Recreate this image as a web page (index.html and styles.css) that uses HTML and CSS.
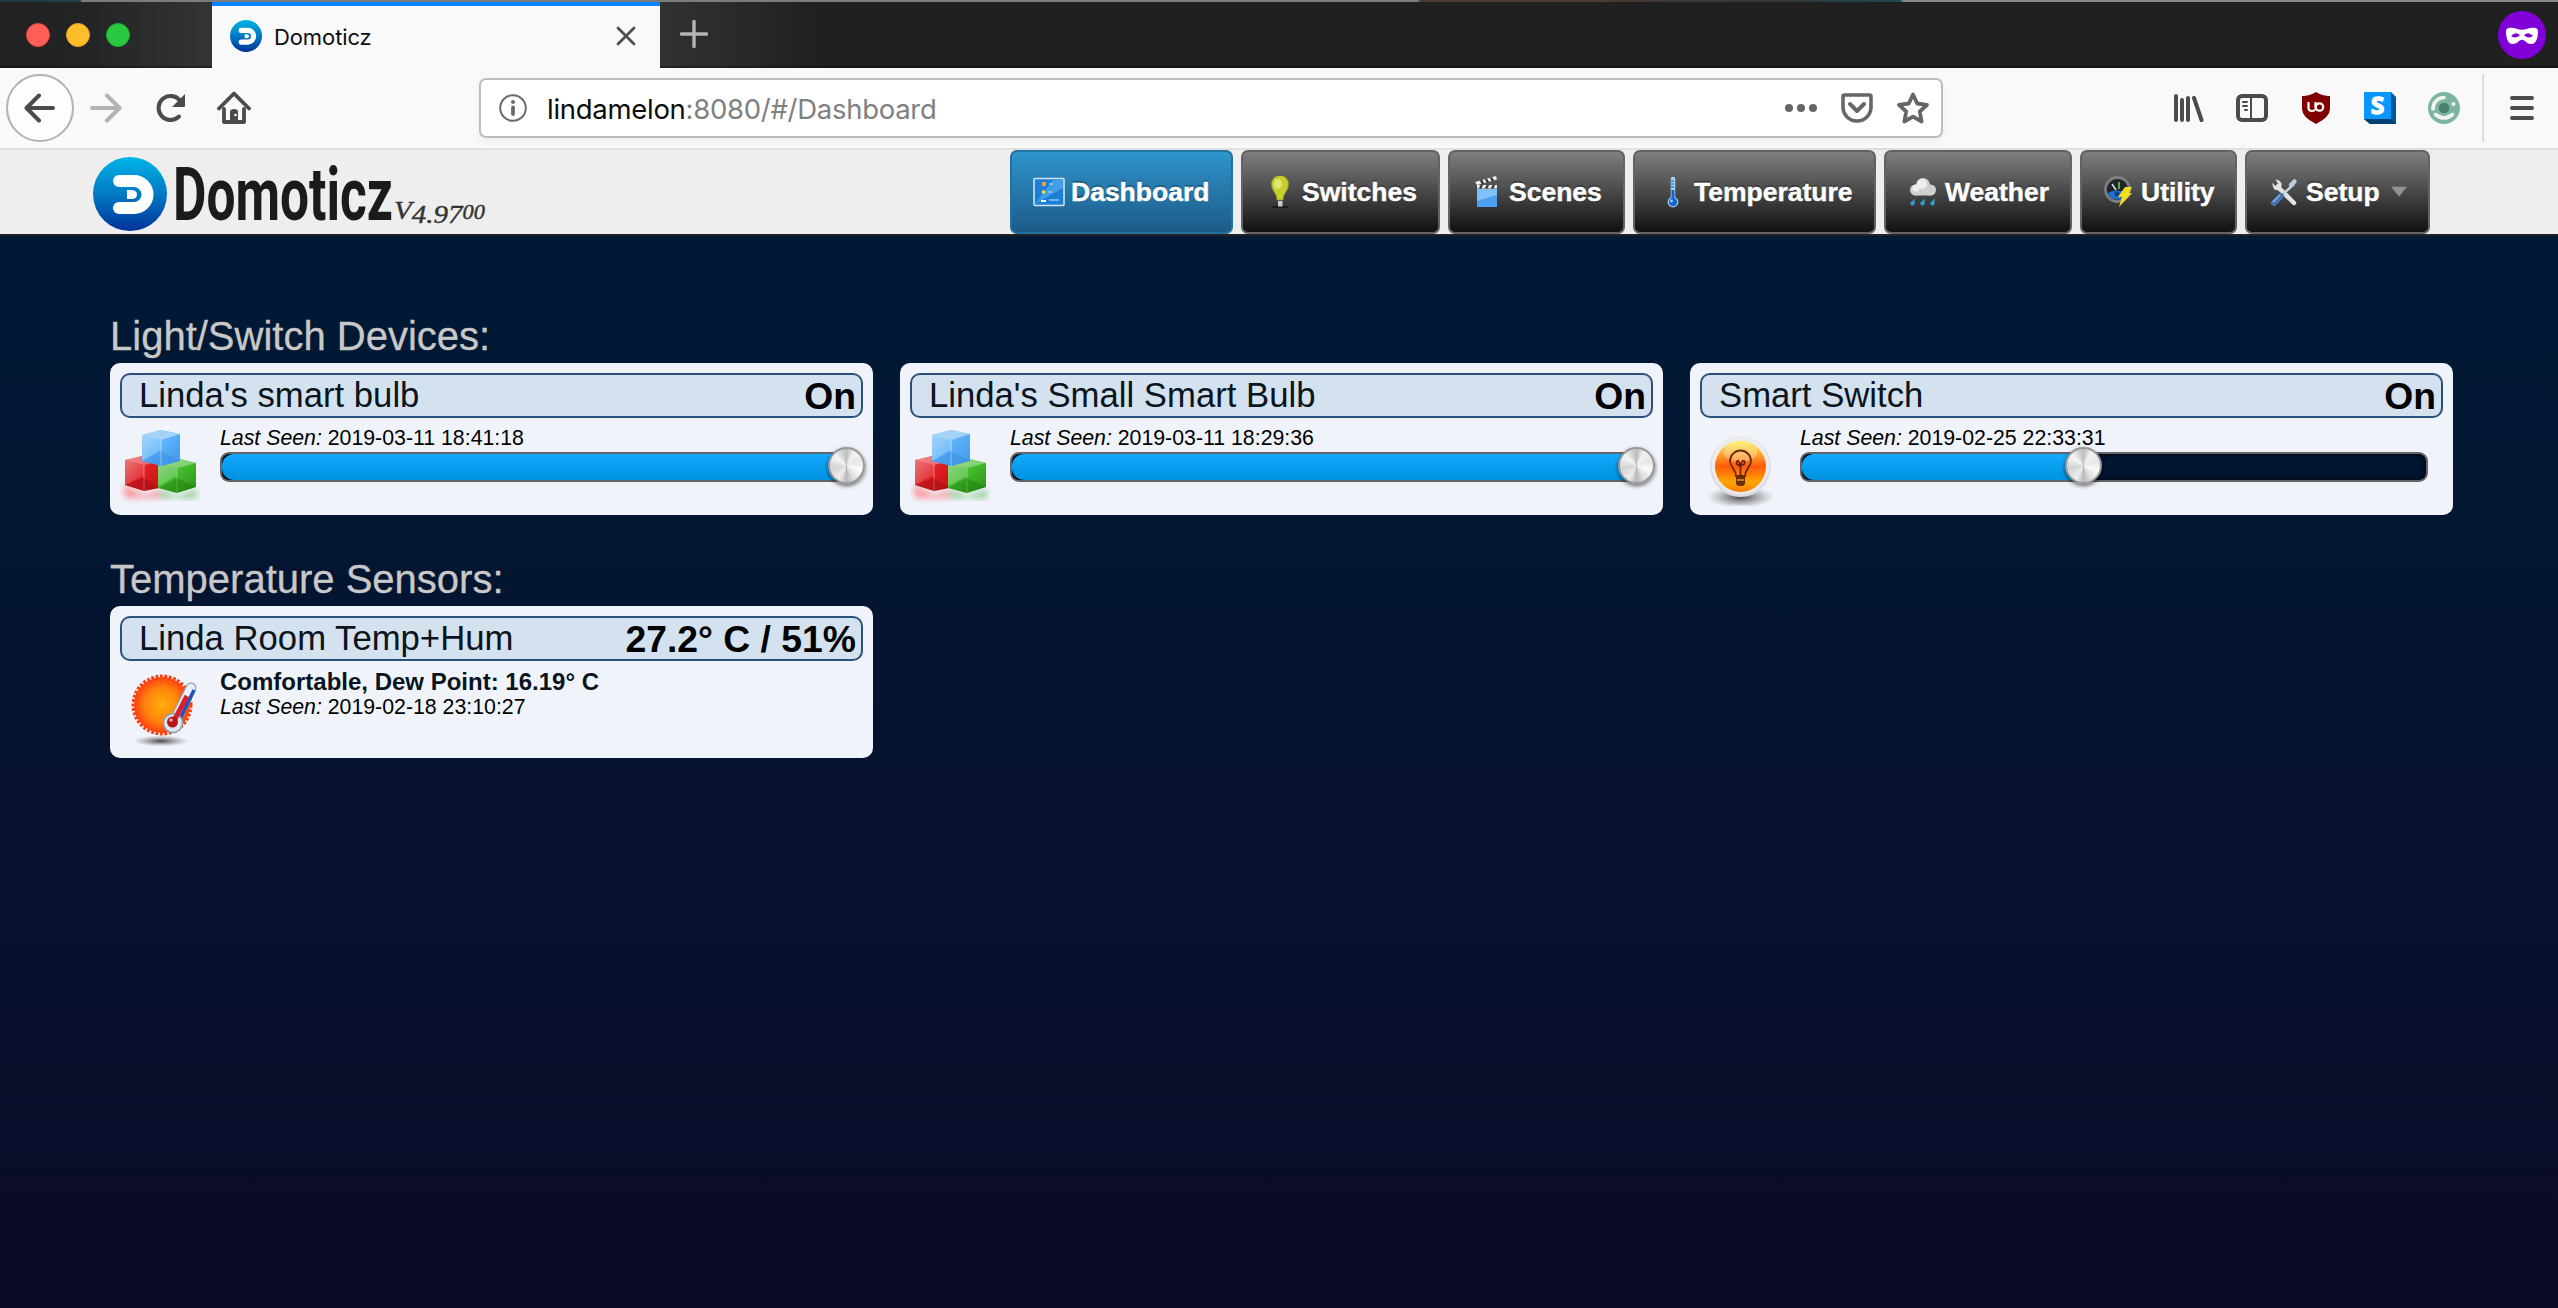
FILE: index.html
```html
<!DOCTYPE html>
<html lang="en">
<head>
<meta charset="utf-8">
<title>Domoticz</title>
<link rel="stylesheet" href="styles.css">
</head>
<body>
<svg class="defs" width="0" height="0" aria-hidden="true">
  <defs>
    <linearGradient id="logoBlue" x1="0" y1="0" x2="0" y2="1"><stop offset="0" stop-color="#00b5e8"/><stop offset=".5" stop-color="#0079c4"/><stop offset="1" stop-color="#003398"/></linearGradient>
    <linearGradient id="cubeBlue" x1="0" y1="0" x2="1" y2="1"><stop offset="0" stop-color="#9bd0fb"/><stop offset=".5" stop-color="#59b0f8"/><stop offset="1" stop-color="#3f97ea"/></linearGradient>
    <linearGradient id="cubeRed" x1="0" y1="0" x2="1" y2="1"><stop offset="0" stop-color="#e8686c"/><stop offset=".5" stop-color="#e01d22"/><stop offset="1" stop-color="#c41216"/></linearGradient>
    <linearGradient id="cubeGreen" x1="0" y1="0" x2="1" y2="1"><stop offset="0" stop-color="#7ccb6c"/><stop offset=".5" stop-color="#41bb2a"/><stop offset="1" stop-color="#2b8c18"/></linearGradient>
    <linearGradient id="orangeDisk" x1="0" y1="0" x2="0" y2="1"><stop offset="0" stop-color="#fff04a"/><stop offset=".3" stop-color="#ff9a2a"/><stop offset=".5" stop-color="#ff5a0a"/><stop offset=".8" stop-color="#ffa500"/><stop offset="1" stop-color="#ff7d08"/></linearGradient>
    <radialGradient id="sunFill"><stop offset="0" stop-color="#ffad0d"/><stop offset=".6" stop-color="#ff850c"/><stop offset="1" stop-color="#fb4112"/></radialGradient>
    <radialGradient id="groundShade"><stop offset="0" stop-color="#333" stop-opacity=".9"/><stop offset="1" stop-color="#777" stop-opacity="0"/></radialGradient>
    <filter id="soft" x="-30%" y="-30%" width="160%" height="160%"><feGaussianBlur stdDeviation="3"/></filter>
    <symbol id="domoticz" viewBox="0 0 74 74">
      <circle cx="37" cy="37" r="37" fill="url(#logoBlue)"/>
      <path d="M26 24h15a13.500 13.500 0 0 1 0 27H26" fill="none" stroke="#fff" stroke-width="12" stroke-linecap="round"/>
      <path d="M34 33h4q6 0 6 4.500t-6 4.500h-4z" fill="#fff"/>
    </symbol>
    <symbol id="cubes" viewBox="0 0 80 80">
      <path d="M3 58L24 69 40 64V72H5z" fill="#ff5a60" opacity=".6" filter="url(#soft)"/>
      <path d="M40 64L57 70 77 64V72H41z" fill="#4fae4a" opacity=".6" filter="url(#soft)"/>
      <path d="M5 34L22 30 39 35V62L24 65 5 59z" fill="url(#cubeRed)"/>
      <path d="M5 34L22 30 39 35 24 39z" fill="#f0a0a0" opacity=".6"/>
      <path d="M24 39V49L5 59V34z" fill="#fff" opacity=".14"/>
      <path d="M24 39V65" stroke="#f49a9c" stroke-width="1" opacity=".7"/>
      <path d="M5 59l19-7 15 10-15 3z" fill="#8e0e12" opacity=".4"/>
      <path d="M38 38L56 32 76 37V61L57 67 38 62z" fill="url(#cubeGreen)"/>
      <path d="M38 38L56 32 76 37 57 42z" fill="#a6dd98" opacity=".65"/>
      <path d="M38 38L57 42V50L38 60z" fill="#fff" opacity=".2"/>
      <path d="M57 42V67" stroke="#8ede7c" stroke-width="1" opacity=".7"/>
      <path d="M38 62l19-10 19 9-19 6z" fill="#17690a" opacity=".35"/>
      <path d="M22 9L41 4 60 8V35L41 40 22 35z" fill="url(#cubeBlue)"/>
      <path d="M22 9L41 4 60 8 41 14z" fill="#a4d3f8"/>
      <path d="M41 14V24L22 35V9z" fill="#fff" opacity=".18"/>
      <path d="M41 14V40" stroke="#a8d8ff" stroke-width="1.200"/>
      <path d="M22 35l19-10 19 10-19 5z" fill="#2a7fd6" opacity=".3"/>
    </symbol>
    <symbol id="bulb" viewBox="0 0 80 80">
      <ellipse cx="40.500" cy="71" rx="34" ry="11" fill="url(#groundShade)"/>
      <circle cx="40.500" cy="40.500" r="30.500" fill="#dcdde0"/>
      <circle cx="40.500" cy="39" r="29" fill="#ececef"/>
      <circle cx="40.500" cy="40.500" r="25.500" fill="url(#orangeDisk)"/>
      <ellipse cx="40.500" cy="26" rx="17" ry="10" fill="#fff" opacity=".28"/>
      <path d="M36 50c0-7-6-9-6-15a10.500 10.500 0 0 1 21 0c0 6-6 8-6 15z" fill="none" stroke="#6a2a08" stroke-width="1.800"/>
      <path d="M40.500 49V40l-4-2q0-4 2-3l2 4 2-4q3-1 2 3l-4 2" fill="none" stroke="#6a1a08" stroke-width="1.600"/>
      <path d="M36 51h9v7l-2 2h-5l-2-2z" fill="#6a3005"/>
      <path d="M37 54h7" stroke="#ffb43a" stroke-width="1.200"/>
    </symbol>
    <symbol id="sun" viewBox="0 0 80 80">
      <ellipse cx="41" cy="72" rx="28" ry="5.500" fill="url(#groundShade)"/>
      <circle cx="42" cy="36" r="28.500" fill="none" stroke="#fb4112" stroke-width="4" stroke-dasharray="2.800 1.600"/>
      <circle cx="42" cy="36" r="28" fill="url(#sunFill)"/>
      <path d="M71 19L54 54" stroke="#8fa3c4" stroke-width="11" stroke-linecap="round"/>
      <path d="M71 19L57 47" stroke="#e9f2fc" stroke-width="8.500" stroke-linecap="round"/>
      <path d="M74 21L60 50" stroke="#1c52c4" stroke-width="3.500"/>
      <circle cx="53" cy="54" r="9.500" fill="#dce8f0" stroke="#8b9fae" stroke-width="1.500"/>
      <path d="M67 27L55 50" stroke="#d8202a" stroke-width="5"/>
      <circle cx="52.500" cy="53" r="5.500" fill="#b5161c"/>
      <circle cx="51" cy="51" r="1.700" fill="#f5b0b0"/>
    </symbol>
  </defs>
</svg>

<div class="desktop-strip"></div>
<div class="tabbar">
  <div class="window-buttons"><i class="dot red"></i><i class="dot yellow"></i><i class="dot green"></i></div>
  <div class="tab">
    <svg class="favicon" width="32" height="32"><use href="#domoticz"/></svg>
    <span class="tab-title">Domoticz</span>
    <svg class="tab-close" width="20" height="20" viewBox="0 0 20 20"><path d="M2 2l16 16M18 2L2 18" stroke="#4f4f50" stroke-width="2.800" stroke-linecap="round"/></svg>
  </div>
  <svg class="new-tab" width="28" height="28" viewBox="0 0 28 28"><path d="M14 1.500v25M1.500 14h25" stroke="#b4b4b4" stroke-width="3.400" stroke-linecap="round"/></svg>
  <svg class="private" width="48" height="48" viewBox="0 0 48 48"><circle cx="24" cy="24" r="24" fill="#8000d7"/><path fill="#fff" fill-rule="evenodd" d="M8 20q0-3 4-3.200c5-.3 8 1.900 12 1.900s7-2.200 12-1.900q4 .2 4 3.200c0 6-1.500 13-6.500 13-5.500 0-6-4.300-9.500-4.300S20 33 14.500 33C9.500 33 8 26 8 20zM13 25q4 3 9-.5-4-4.500-9 .5zM35 25q-4 3-9-.5 4-4.500 9 .5z"/></svg>
</div>

<div class="toolbar">
  <div class="nav-icons">
    <span class="back"><svg width="32" height="32" viewBox="0 0 32 32"><path d="M29 16H3M15 3.500L2.500 16 15 28.500" fill="none" stroke="#4b4b4c" stroke-width="4" stroke-linecap="round" stroke-linejoin="round"/></svg></span>
    <svg class="forward" width="32" height="32" viewBox="0 0 32 32"><path d="M2 16h26M17 3.500L29.500 16 17 28.500" fill="none" stroke="#b3b3b4" stroke-width="4" stroke-linecap="round" stroke-linejoin="round"/></svg>
    <svg class="reload" width="32" height="32" viewBox="0 0 32 32"><path d="M24 24.500A12 12 0 1 1 25 8.500" fill="none" stroke="#4b4b4c" stroke-width="4" stroke-linecap="round"/><path d="M30 2v12q0 1-1 1H17z" fill="#4b4b4c"/></svg>
    <svg class="home" width="34" height="34" viewBox="0 0 34 34"><path d="M7 18v13h20V18M2 17.500L17 2.500l15 15" fill="none" stroke="#4b4b4c" stroke-width="3.800" stroke-linecap="round" stroke-linejoin="round"/><path d="M13 30v-9q0-3 4-3t4 3v9z" fill="#4b4b4c"/><circle cx="18.500" cy="24" r="1.300" fill="#fff"/></svg>
  </div>
  <div class="urlbar">
    <svg class="info" width="28" height="28" viewBox="0 0 28 28"><circle cx="14" cy="14" r="12.800" fill="none" stroke="#6b6b6c" stroke-width="2"/><circle cx="14" cy="8" r="2" fill="#6b6b6c"/><path d="M14 13.500v6.500" stroke="#6b6b6c" stroke-width="3.800" stroke-linecap="round"/></svg>
    <span class="url">lindamelon<span class="url-rest">:8080/#/Dashboard</span></span>
    <svg class="more" width="32" height="8" viewBox="0 0 32 8"><g fill="#666667"><circle cx="4" cy="4" r="4"/><circle cx="16" cy="4" r="4"/><circle cx="28" cy="4" r="4"/></g></svg>
    <svg class="pocket" width="32" height="30" viewBox="0 0 32 30"><path d="M3.500 2h25q1.500 0 1.500 1.500V14a14 14 0 0 1-28 0V3.500Q2 2 3.500 2z" fill="none" stroke="#666667" stroke-width="3.600"/><path d="M9 11l7 7 7-7" fill="none" stroke="#666667" stroke-width="4" stroke-linecap="round" stroke-linejoin="round"/></svg>
    <svg class="star" width="32" height="32" viewBox="0 0 32 32"><path d="M16 2.500l4.200 9 9.800 1.300-7.200 6.700 1.800 10L16 24.700 7.400 29.500l1.800-10L2 12.800l9.800-1.300z" fill="none" stroke="#666667" stroke-width="3.800" stroke-linejoin="round"/></svg>
  </div>
  <div class="ext-icons">
    <svg width="32" height="28" viewBox="0 0 32 28"><path d="M4 2v24M10 6v20M16 4v22M22 4L29.500 26" stroke="#4b4b4c" stroke-width="4" stroke-linecap="round"/></svg>
    <svg width="32" height="28" viewBox="0 0 32 28"><rect x="2" y="2" width="28" height="24" rx="4" fill="none" stroke="#4b4b4c" stroke-width="4"/><path d="M15 2v24M7 8h4M7 12h4M9 16h2" stroke="#4b4b4c" stroke-width="2" stroke-linecap="round"/></svg>
    <svg width="32" height="32" viewBox="0 0 32 32"><path d="M16 0q6 4 14 4v13q0 8-14 15Q2 25 2 17V4q8 0 14-4z" fill="#800000"/><path d="M8.500 10v6q0 3 3.500 3 2.500 0 3.200-2M15.500 10v6" fill="none" stroke="#fff" stroke-width="2.200"/><circle cx="19.500" cy="15" r="3.700" fill="none" stroke="#fff" stroke-width="2.200"/></svg>
    <svg width="32" height="32" viewBox="0 0 32 32" class="overflowing"><path d="M27 0l5 5v27H6l-6-5z" fill="#00599c"/><path d="M0 27h27l5 5H6z" fill="#004072"/><path d="M0 0h27v27H0z" fill="#0996ff"/><text x="13.500" y="22" class="s-letter" text-anchor="middle">S</text></svg>
    <svg width="32" height="32" viewBox="0 0 32 32"><circle cx="16" cy="16" r="16" fill="#7db59e"/><circle cx="16" cy="16" r="5.300" fill="#4a7f6b"/><path d="M5 17A11 11 0 0 1 16 5.500M7.500 22.500q8.500 7 17 0" fill="none" stroke="#f0f5f2" stroke-width="3.600" stroke-linecap="round"/><circle cx="25.500" cy="12" r="2" fill="#f4f8f6"/></svg>
  </div>
  <svg class="menu" width="24" height="24" viewBox="0 0 24 24"><path d="M2 2h20M2 12h20M2 22h20" stroke="#4b4b4c" stroke-width="4" stroke-linecap="round"/></svg>
</div>

<header class="app-header">
  <svg class="logo overflowing" width="400" height="84" viewBox="0 0 400 84">
    <use href="#domoticz" x="1" y="7" width="74" height="74"/>
    <text class="logo-name" x="81" y="70" textLength="220" lengthAdjust="spacingAndGlyphs">Domoticz</text>
    <text class="logo-version" x="302" y="68.500" textLength="91" lengthAdjust="spacingAndGlyphs">V<tspan dy="4">4.97</tspan><tspan dy="-4" class="low">00</tspan></text>
  </svg>
  <nav class="menu-items">
    <a class="item active"><svg width="32" height="32" viewBox="0 0 32 32"><rect x="1" y="2.500" width="30" height="27" rx="1" fill="#1c7fd6" stroke="#cfe4f2" stroke-width="1.600"/><path d="M2 28L20 4H30V12z" fill="#5bb4f2" opacity=".6"/><path d="M9 6h4v4H9z" fill="#e8a33a"/><circle cx="10.500" cy="16" r="1.800" fill="#f6e04a"/><path d="M8 25h5" stroke="#fff" stroke-width="2"/><path d="M16 8h4M15 16h4M16 24h10" stroke="#8cc8f6" stroke-width="1.500"/></svg>Dashboard</a>
    <a class="item"><svg width="32" height="32" viewBox="0 0 32 32"><ellipse cx="16" cy="31" rx="9" ry="1.500" fill="#111" opacity=".7"/><path d="M13 24C13 17 7.500 15 7.500 8a8.500 8.500 0 0 1 17 0C24.500 15 19 17 19 24z" fill="#c6cf2e" stroke="#8d9530" stroke-width=".8"/><ellipse cx="14" cy="8" rx="4" ry="5" fill="#f2f5a2" opacity=".6"/><path d="M14 25h4.500v5.500H14z" fill="#c9c9c9"/></svg>Switches</a>
    <a class="item"><svg width="32" height="32" viewBox="0 0 32 32"><path d="M6 13h20v18H6z" fill="#4a9ff0"/><path d="M6 13h20v6L6 25z" fill="#7fc0fa"/><path d="M6 9h20v3.500H6z" fill="#eee"/><path d="M4 6L25 0l1 3.500L6 9z" fill="#eee"/><path d="M10 4l2 4M15 3l2 3.500M20 1.500l2 3.500M11 9l-2 3.500M17 9l-2 3.500M23 9l-2 3.500" stroke="#333" stroke-width="2.400"/></svg>Scenes</a>
    <a class="item"><svg width="32" height="32" viewBox="0 0 32 32"><path d="M17 3v21" stroke="#a8d4f4" stroke-width="4.500" stroke-linecap="round"/><circle cx="17" cy="26" r="4.800" fill="#1464cc" stroke="#9cc8ec" stroke-width="1.300"/><path d="M17 14v12" stroke="#1464cc" stroke-width="3"/><path d="M15 5h3M15 8h3M15 11h3" stroke="#2a7fd8" stroke-width="1.500"/><circle cx="15.500" cy="25" r="1.400" fill="#8fd0ff"/></svg>Temperature</a>
    <a class="item"><svg width="32" height="32" viewBox="0 0 32 32"><g fill="#d0d0d0"><circle cx="8.500" cy="14" r="5.500"/><circle cx="23.500" cy="14" r="5.500"/><circle cx="16" cy="9" r="7"/><path d="M8 12h16v7.500H8z"/></g><circle cx="15" cy="8" r="5" fill="#eee"/><circle cx="9" cy="12" r="3.500" fill="#eee"/><g fill="#2e9fd0"><path d="M8 22.500l-.5 4a2.200 2.200 0 1 1-4 0zM18 22.500l-.5 4a2.200 2.200 0 1 1-4 0zM28 22.500l-.5 4a2.200 2.200 0 1 1-4 0z"/></g></svg>Weather</a>
    <a class="item"><svg width="32" height="32" viewBox="0 0 32 32"><circle cx="14.500" cy="13.500" r="12" fill="#20242c" stroke="#7b7d7f" stroke-width="2.800"/><path d="M4.500 17Q14 12 24.500 17A11 11 0 0 1 4.500 17z" fill="#1f70d8"/><path d="M9 8l4 6" stroke="#ddd" stroke-width="1.500"/><path d="M16 6v7" stroke="#62c22c" stroke-width="1.800"/><circle cx="14" cy="18" r="2.500" fill="#14407c"/><path d="M22 11h7l-3 6h3L16 31l3-10h-4z" fill="#f3dc1e"/></svg>Utility</a>
    <a class="item"><svg width="32" height="32" viewBox="0 0 32 32"><path d="M10 11L26 27" stroke="#e3e3e3" stroke-width="4.500" stroke-linecap="round"/><path d="M4.500 6.500q-.5 8 6 8 4-4 3-7-2-4-6-4l2.500 4-3 2.500z" fill="#e3e3e3"/><path d="M13 20L26 8" stroke="#c4d2e2" stroke-width="2.500"/><path d="M23 9l3.500-3.500" stroke="#b9cbe0" stroke-width="4.500" stroke-linecap="round"/><path d="M13 20L6 27" stroke="#4472b8" stroke-width="6" stroke-linecap="round"/><path d="M12 19l-7 7" stroke="#8eb2e4" stroke-width="1.500"/></svg>Setup<i class="caret"></i></a>
  </nav>
</header>

<main class="content">
  <h2>Light/Switch Devices:</h2>
  <div class="cards">
    <section class="card">
      <div class="card-title"><span>Linda's smart bulb</span><b>On</b></div>
      <div class="card-body"><svg width="80" height="80"><use href="#cubes"/></svg>
        <div class="info-col"><p class="seen"><em>Last Seen:</em> 2019-03-11 18:41:18</p><div class="slider"><div class="range" style="width:100%"></div><div class="handle" style="left:100%"></div></div></div>
      </div>
    </section>
    <section class="card">
      <div class="card-title"><span>Linda's Small Smart Bulb</span><b>On</b></div>
      <div class="card-body"><svg width="80" height="80"><use href="#cubes"/></svg>
        <div class="info-col"><p class="seen"><em>Last Seen:</em> 2019-03-11 18:29:36</p><div class="slider"><div class="range" style="width:100%"></div><div class="handle" style="left:100%"></div></div></div>
      </div>
    </section>
    <section class="card">
      <div class="card-title"><span>Smart Switch</span><b>On</b></div>
      <div class="card-body"><svg width="80" height="80"><use href="#bulb"/></svg>
        <div class="info-col"><p class="seen"><em>Last Seen:</em> 2019-02-25 22:33:31</p><div class="slider"><div class="range" style="width:45.1%"></div><div class="handle" style="left:45.1%"></div></div></div>
      </div>
    </section>
  </div>
  <h2>Temperature Sensors:</h2>
  <div class="cards">
    <section class="card">
      <div class="card-title"><span>Linda Room Temp+Hum</span><b>27.2° C / 51%</b></div>
      <div class="card-body"><svg width="80" height="80"><use href="#sun"/></svg>
        <div class="info-col"><p class="comfort">Comfortable, Dew Point: 16.19° C</p><p class="seen"><em>Last Seen:</em> 2019-02-18 23:10:27</p></div>
      </div>
    </section>
  </div>
</main>
</body>
</html>
```
FILE: styles.css
```css
* { box-sizing: border-box; }
html, body { height: 100%; }
body {
  margin: 0;
  display: flex;
  flex-direction: column;
  overflow: hidden;
  font-family: "Liberation Sans", Arial, sans-serif;
  color: #0a141c;
  background: #001a33;
}
svg { display: block; flex: none; }
.defs { position: absolute; }
.overflowing { overflow: visible; }

/* Browser window */
.desktop-strip {
  height: 2px;
  flex: none;
  background: linear-gradient(90deg, #223b47 0 80px, #7c7c7c 82px 1418px, #4a3a30 1420px 1600px, #33373c 1780px, #1c4a50 1900px, #898b88 1904px);
}
.tabbar {
  height: 66px;
  flex: none;
  display: flex;
  align-items: center;
  background: linear-gradient(90deg, #222 0, #222324 80px, #323436 212px, #323232 660px, #202020 820px);
  box-shadow: inset 0 -2px 0 rgba(0, 0, 0, .3);
}
.window-buttons { width: 212px; display: flex; gap: 16px; padding-left: 26px; }
.dot { width: 24px; height: 24px; border-radius: 50%; }
.red { background: #ff5f57; border: 1px solid #e2463f; }
.yellow { background: #ffbd2e; border: 1px solid #dfa023; }
.green { background: #28c940; border: 1px solid #1dad2b; }
.tab {
  width: 448px;
  height: 66px;
  display: flex;
  align-items: center;
  padding: 2px 24px 0 18px;
  background: #f9f9fa;
  border-top: 4px solid #0a84ff;
}
.tab-title {
  flex: 1;
  margin: -2px 0 0 12px;
  font: 22px/30px Inter, sans-serif;
  letter-spacing: -.1px;
  color: #0c0c0d;
}
.favicon, .tab-close { margin-top: -4px; }
.new-tab { margin-left: 20px; margin-top: -2px; }
.private { margin-left: auto; margin-right: 12px; }

.toolbar {
  height: 82px;
  flex: none;
  display: flex;
  align-items: center;
  background: #f9f9fa;
  border-bottom: 2px solid #e0e0e1;
}
.nav-icons { width: 479px; display: flex; align-items: center; padding-left: 6px; }
.back {
  width: 68px;
  height: 68px;
  display: flex;
  align-items: center;
  justify-content: center;
  background: #fdfdfd;
  border: 2px solid #b2b2b3;
  border-radius: 50%;
}
.forward { margin-left: 16px; }
.reload { margin-left: 33px; }
.home { margin-left: 30px; }
.urlbar {
  width: 1464px;
  height: 60px;
  display: flex;
  align-items: center;
  padding: 0 12px 0 18px;
  background: #fff;
  border: 2px solid #bdbdbe;
  border-radius: 7px;
  box-shadow: 0 3px 8px rgba(0, 0, 0, .05);
}
.url {
  flex: 1;
  margin: 1px 0 0 20px;
  font: 27.5px/36px Inter, sans-serif;
  letter-spacing: -.28px;
  color: #0c0c0d;
}
.url-rest { color: #808081; }
.pocket { margin-left: 24px; }
.star { margin-left: 24px; }
.ext-icons { display: flex; align-items: center; gap: 32px; margin-left: 229px; }
.s-letter { font: bold 24px "Open Sans", sans-serif; fill: #fff; stroke: #fff; stroke-width: 1.500px; }
.menu {
  box-sizing: content-box;
  margin-left: 22px;
  padding: 22px 0 22px 26px;
  border-left: 2px solid #dedede;
}

/* Application header */
.app-header {
  height: 86px;
  flex: none;
  display: flex;
  justify-content: space-between;
  padding: 0 128px 0 92px;
  background: #eee;
  border-bottom: 2px solid #222;
}
.logo-name { font: bold 75px Roboto, sans-serif; fill: #1b1b1b; }
.logo-version { font: italic 26px "Liberation Serif", serif; fill: #333; stroke: #333; stroke-width: .4px; }
.logo-version .low { font-size: 20px; }
.menu-items {
  display: grid;
  grid-template-columns: 223px 199px 177px 243px 188px 157px 185px;
  gap: 8px;
}
.item {
  display: flex;
  align-items: center;
  height: 84px;
  padding-left: 21px;
  border: 2px solid #636363;
  border-radius: 7px;
  background: linear-gradient(#7f7f7f, #111);
  color: #fff;
  font-size: 26.500px;
  line-height: 30px;
  font-weight: bold;
  text-shadow: 0 -2px 1px rgba(0, 0, 0, .3);
  -webkit-text-stroke: .4px #fff;
}
.item svg { margin-right: 6px; }
.active { background: linear-gradient(#2f95cb, #1c5a88); border-color: #23719f; }
.caret { margin-left: 11px; border: 8px solid transparent; border-top: 13px solid #929292; border-bottom: 0; transform: translateY(-1px) scaleY(.75); }

/* Dashboard */
.content { flex: 1; padding: 74px 105px 0 110px; background: linear-gradient(#001a35, #0b0a28); }
h2 {
  margin: 0 0 2px;
  padding-top: 1px;
  font-size: 40px;
  line-height: 50px;
  font-weight: normal;
  color: #c8c8c8;
  -webkit-text-stroke: .3px #c8c8c8;
}
.cards {
  display: grid;
  grid-template-columns: repeat(3, 763px);
  gap: 27px;
  margin-bottom: 38px;
}
.card { height: 152px; padding: 10px; border-radius: 10px; background: #f0f4fa; }
.card-title {
  height: 45px;
  display: flex;
  justify-content: space-between;
  padding: 0 5px 0 17px;
  border: 2px solid #2b527d;
  border-radius: 10px;
  background: #d4e1ee;
  font-size: 34.7px;
  line-height: 41px;
}
.card-title b { font-size: 37.300px; line-height: 43px; color: #000; }
.card-body { display: flex; gap: 20px; }
.card-body svg { margin-top: 8px; }
.info-col { width: 628px; padding-top: 8px; }
.seen { margin: 0; font-size: 21.3px; line-height: 24px; color: #000; }
.comfort { margin: 0; font-size: 24px; line-height: 26px; font-weight: bold; }
.slider {
  position: relative;
  height: 30px;
  margin-top: 2px;
  border: 2px solid #666;
  border-radius: 9px;
  background: #001530;
  box-shadow: inset 0 0 5px #000;
}
.range { height: 26px; border-radius: 12px 0 0 12px; background: linear-gradient(#14a8ff, #0093e0); }
.handle {
  position: absolute;
  top: -7px;
  width: 37px;
  height: 37px;
  margin-left: -18px;
  border: 2px solid #96989a;
  border-radius: 50%;
  background: conic-gradient(#bdbdbd, #f2f2f2 30deg, #e6e6e6 70deg, #fafafa 110deg, #e0e0e0 150deg, #b9b9b9 180deg, #eee 210deg, #d4d4d4 260deg, #f6f6f6 310deg, #bdbdbd);
  box-shadow: 0 2px 4px rgba(0, 0, 0, .6);
}
```
